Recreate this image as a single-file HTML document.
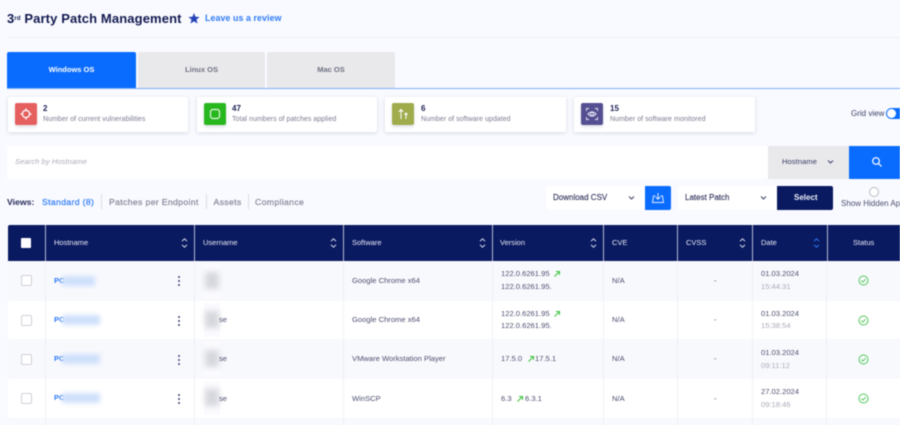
<!DOCTYPE html>
<html><head><meta charset="utf-8"><style>
*{box-sizing:border-box}
html,body{margin:0;padding:0;width:900px;height:425px;overflow:hidden;background:#f9faff}
body{font-family:"Liberation Sans",sans-serif;color:#3d4264}
#p{position:relative;width:900px;height:425px;overflow:hidden;filter:blur(.5px)}
#p div,#p span.a,#p svg{position:absolute}
.t{white-space:nowrap;line-height:12px}
.tab{top:52px;height:36px;background:#e9e9ec;font-size:7.5px;font-weight:bold;color:#6f7182;text-align:center;line-height:36px;border-radius:2px 2px 0 0}
.card{top:97px;height:35px;background:#fff;box-shadow:0 1px 4px rgba(40,50,90,.16);border-radius:2px}
.ic{top:103px;width:21.5px;height:21.5px;border-radius:2px;box-shadow:0 2px 3px rgba(40,50,90,.15)}
.n{top:103px;font-size:8px;font-weight:bold;color:#1c2154}
.s{top:114px;font-size:7px;color:#797b90;letter-spacing:.05px}
.th{top:225px;height:36px;background:#0a1a60;border-right:1px solid #b4bad4}
.hl{top:237px;font-size:7.5px;color:#e9ebf7}
.r{left:8px;width:892px}
.v{top:261px;height:164px;width:1px;background:#f0f1f7}
.c{font-size:7.6px;color:#4d5070}
.cb{left:21px;width:11px;height:11px;border:1px solid #cfd0d8;border-radius:2px;background:#fff}
.g{color:#a9abb9}
.host{left:54px;font-size:7.5px;font-weight:bold;color:#2f7bf5}
.bl{left:62px;width:38px;height:10px;background:#cfe0fb;filter:blur(2.5px)}
.halo{left:204px;width:16px;height:34px;background:#fbfbfe}
.gr{left:205px;width:14px;height:17px;background:#d6d7dd;filter:blur(3px)}
.dot{left:178px;width:2px;height:2px;border-radius:50%;background:#3f4576}
.link{color:#2f7bf5;font-weight:bold}
.vw{top:196px;font-size:8.7px;color:#858799;-webkit-text-stroke:.2px #858799;letter-spacing:.33px}
</style></head><body><div id="p">

<div class="t" style="left:7px;top:12px;font-size:13px;line-height:14px;font-weight:bold;color:#12194f;letter-spacing:.12px">3<span style="font-size:6px;vertical-align:3px">rd</span> Party Patch Management</div>
<svg style="left:188px;top:12px" width="12" height="13" viewBox="0 0 12 13"><path d="M6 1l1.500 3.700 4 .3-3 2.600 1 3.900L6 9.400 2.500 11.500l1-3.900-3-2.600 4-.3z" fill="#2444b8"/></svg>
<div class="t link" style="left:205px;top:12px;font-size:8.800px;letter-spacing:.1px">Leave us a review</div>
<div style="left:7px;top:37px;width:893px;height:1px;background:#eff0f5"></div>

<div class="tab" style="left:7px;width:129px;background:#0a6cff;color:#fff">Windows OS</div>
<div class="tab" style="left:138px;width:127px">Linux OS</div>
<div class="tab" style="left:267px;width:128px">Mac OS</div>
<div style="left:7px;top:88px;width:893px;height:1px;background:#7fb0fb"></div>

<div class="card" style="left:8px;width:180px"></div>
<div class="card" style="left:197px;width:180px"></div>
<div class="card" style="left:385px;width:181px"></div>
<div class="card" style="left:574px;width:181px"></div>

<div class="ic" style="left:15px;background:#e55f5f"></div>
<svg style="left:19px;top:107px" width="14" height="14" viewBox="0 0 14 14" fill="none" stroke="#fff" stroke-width="1.300"><circle cx="7" cy="7" r="3.600"/><path d="M7 1.500v2M7 10.500v2M1.500 7h2M10.500 7h2"/></svg>
<div class="ic" style="left:204px;background:#28b71f"></div>
<svg style="left:208px;top:107px" width="14" height="14" viewBox="0 0 14 14" fill="none" stroke="#e6f7e4" stroke-width="1.200"><rect x="2.500" y="2.500" width="9" height="9" rx="2.500"/></svg>
<div class="ic" style="left:392px;background:#a0ab4c"></div>
<svg style="left:396px;top:107px" width="14" height="14" viewBox="0 0 14 14" fill="none" stroke="#fff" stroke-width="1"><path d="M5 12V2.500M2.800 4.800L5 2.500l2.200 2.300M10 12V6M8.300 7.800L10 6l1.700 1.800"/></svg>
<div class="ic" style="left:581px;background:#544f92"></div>
<svg style="left:585px;top:107px" width="14" height="14" viewBox="0 0 14 14" fill="none" stroke="#e6e5f3" stroke-width=".9"><path d="M1.500 4V1.500H4M10 1.500h2.500V4M12.500 10v2.500H10M4 12.500H1.500V10"/><path d="M2.800 7Q7 2.800 11.200 7 7 11.200 2.800 7z"/><circle cx="7" cy="7" r="1.500"/></svg>

<div class="t n" style="left:43px">2</div>
<div class="t s" style="left:43px">Number of current vulnerabilities</div>
<div class="t n" style="left:232px">47</div>
<div class="t s" style="left:232px">Total numbers of patches applied</div>
<div class="t n" style="left:421px">6</div>
<div class="t s" style="left:421px">Number of software updated</div>
<div class="t n" style="left:610px">15</div>
<div class="t s" style="left:610px">Number of software monitored</div>

<div class="t" style="left:851px;top:108px;font-size:8px;color:#3f4367">Grid view</div>
<div style="left:886px;top:108px;width:22px;height:11px;border-radius:6px;background:#0a6cff"></div>
<div style="left:887px;top:109px;width:9px;height:9px;border-radius:50%;background:#fff"></div>

<div style="left:7px;top:146px;width:761px;height:33px;background:#fff"></div>
<div class="t" style="left:15px;top:156px;font-size:7.500px;font-style:italic;color:#a9abb9;letter-spacing:.1px">Search by Hostname</div>
<div style="left:768px;top:146px;width:81px;height:33px;background:#e9e9ec"></div>
<div class="t" style="left:782px;top:156px;font-size:7.500px;color:#343860;letter-spacing:.1px">Hostname</div>
<svg style="left:827px;top:159px" width="7" height="6" viewBox="0 0 7 6" fill="none" stroke="#3f4367" stroke-width="1"><path d="M1 1.500l2.500 2.500L6 1.500"/></svg>
<div style="left:849px;top:146px;width:51px;height:33px;background:#0a6cff"></div>
<svg style="left:871px;top:156px" width="12" height="12" viewBox="0 0 12 12" fill="none" stroke="#fff" stroke-width="1.200"><circle cx="5" cy="5" r="3.300"/><path d="M7.500 7.500l3 3"/></svg>

<div class="t" style="left:7px;top:196px;font-size:8.700px;font-weight:bold;color:#232858">Views:</div>
<div class="t link" style="left:42px;top:196px;font-size:8.700px;font-weight:normal;-webkit-text-stroke:.2px #2f7bf5;letter-spacing:.33px">Standard (8)</div>
<div style="left:100.500px;top:194px;width:1px;height:15px;background:#dcdde5"></div>
<div class="t vw" style="left:109px">Patches per Endpoint</div>
<div style="left:206px;top:194px;width:1px;height:15px;background:#dcdde5"></div>
<div class="t vw" style="left:213.500px">Assets</div>
<div style="left:248px;top:194px;width:1px;height:15px;background:#dcdde5"></div>
<div class="t vw" style="left:255px">Compliance</div>

<div style="left:546px;top:186px;width:99px;height:24px;background:#fff;border-radius:2px"></div>
<div class="t" style="left:553px;top:192px;font-size:8px;color:#343860;-webkit-text-stroke:.15px #343860">Download CSV</div>
<svg style="left:628px;top:195px" width="7" height="6" viewBox="0 0 7 6" fill="none" stroke="#3f4367" stroke-width="1"><path d="M1 1.500l2.500 2.500L6 1.500"/></svg>
<div style="left:645px;top:186px;width:26px;height:24px;background:#0a6cff;border-radius:0 2px 2px 0"></div>
<svg style="left:651px;top:191px" width="14" height="14" viewBox="0 0 14 14" fill="none" stroke="#dbe9ff" stroke-width="1"><path d="M7 2v6M4.800 6L7 8.200 9.200 6M4.500 5H2.500L1.500 11.500h11L11.500 5h-2"/></svg>
<div style="left:678px;top:186px;width:99px;height:24px;background:#fff;border-radius:2px"></div>
<div class="t" style="left:685px;top:192px;font-size:8px;color:#343860;-webkit-text-stroke:.15px #343860">Latest Patch</div>
<svg style="left:760px;top:195px" width="7" height="6" viewBox="0 0 7 6" fill="none" stroke="#3f4367" stroke-width="1"><path d="M1 1.500l2.500 2.500L6 1.500"/></svg>
<div style="left:777px;top:186px;width:56px;height:24px;background:#0a1a60;border-radius:0 2px 2px 0"></div>
<div class="t" style="left:794px;top:192px;font-size:8px;font-weight:bold;color:#eef0fa">Select</div>
<div style="left:869px;top:187px;width:10px;height:10px;border:1px solid #b9bac4;border-radius:50%;background:#fff"></div>
<div class="t" style="left:841px;top:198px;font-size:8px;color:#4d5070">Show Hidden Apps</div>

<!-- table rows -->
<div class="r" style="top:261px;height:40px;background:#f8f9fd"></div>
<div class="r" style="top:301px;height:38px;background:#fff"></div>
<div class="r" style="top:339px;height:40px;background:#f8f9fd"></div>
<div class="r" style="top:379px;height:39px;background:#fff"></div>
<div class="r" style="top:418px;height:7px;background:#f8f9fd"></div>
<div class="v" style="left:45px"></div><div class="v" style="left:194px"></div><div class="v" style="left:343px"></div><div class="v" style="left:492px"></div><div class="v" style="left:603px"></div><div class="v" style="left:677px"></div><div class="v" style="left:752px"></div><div class="v" style="left:826px"></div>

<!-- header -->
<div class="th" style="left:8px;width:38px;border-radius:2px 0 0 0"></div>
<div class="th" style="left:46px;width:149px"></div>
<div class="th" style="left:195px;width:149px"></div>
<div class="th" style="left:344px;width:149px"></div>
<div class="th" style="left:493px;width:111px"></div>
<div class="th" style="left:604px;width:74px"></div>
<div class="th" style="left:678px;width:75px"></div>
<div class="th" style="left:753px;width:75px"></div>
<div class="th" style="left:828px;width:72px;border-right:0"></div>
<div style="left:21px;top:238px;width:10px;height:10px;background:#fff;border-radius:1px"></div>
<div class="t hl" style="left:54px">Hostname</div>
<div class="t hl" style="left:203px">Username</div>
<div class="t hl" style="left:352px">Software</div>
<div class="t hl" style="left:500px">Version</div>
<div class="t hl" style="left:612px">CVE</div>
<div class="t hl" style="left:686px">CVSS</div>
<div class="t hl" style="left:761px">Date</div>
<div class="t hl" style="left:853px">Status</div>
<svg style="left:181px;top:237px" width="7" height="12" viewBox="0 0 7 12" fill="none" stroke="#dfe2f0" stroke-width="1"><path d="M1 4.200L3.500 1.800 6 4.200M1 7.800l2.500 2.400L6 7.800"/></svg>
<svg style="left:330px;top:237px" width="7" height="12" viewBox="0 0 7 12" fill="none" stroke="#dfe2f0" stroke-width="1"><path d="M1 4.200L3.500 1.800 6 4.200M1 7.800l2.500 2.400L6 7.800"/></svg>
<svg style="left:479px;top:237px" width="7" height="12" viewBox="0 0 7 12" fill="none" stroke="#dfe2f0" stroke-width="1"><path d="M1 4.200L3.500 1.800 6 4.200M1 7.800l2.500 2.400L6 7.800"/></svg>
<svg style="left:590px;top:237px" width="7" height="12" viewBox="0 0 7 12" fill="none" stroke="#dfe2f0" stroke-width="1"><path d="M1 4.200L3.500 1.800 6 4.200M1 7.800l2.500 2.400L6 7.800"/></svg>
<svg style="left:739px;top:237px" width="7" height="12" viewBox="0 0 7 12" fill="none" stroke="#dfe2f0" stroke-width="1"><path d="M1 4.200L3.500 1.800 6 4.200M1 7.800l2.500 2.400L6 7.800"/></svg>
<svg style="left:813px;top:237px" width="7" height="12" viewBox="0 0 7 12" fill="none" stroke-width="1"><path stroke="#2f7bf5" d="M1 4.200L3.500 1.800 6 4.200"/><path stroke="#2f7bf5" d="M1 7.800l2.500 2.400L6 7.800"/></svg>

<!-- row 1 -->
<div class="cb" style="top:275px"></div><div class="t host" style="top:275px">PC</div><div class="bl" style="top:276px;width:33px"></div>
<div class="dot" style="top:276px"></div><div class="dot" style="top:280px"></div><div class="dot" style="top:284px"></div>
<div class="halo" style="top:264px"></div><div class="gr" style="top:272px"></div>
<div class="t c" style="left:352px;top:275px">Google Chrome x64</div>
<div class="t c" style="left:501px;top:268px">122.0.6261.95</div>
<svg style="left:553px;top:270px" width="8" height="8" viewBox="0 0 8 8" fill="none" stroke="#3cc23a" stroke-width="1"><path d="M1.500 6.500L6.500 1.500M3 1.500h3.500V5"/></svg>
<div class="t c" style="left:501px;top:281px">122.0.6261.95.</div>
<div class="t c" style="left:612px;top:275px">N/A</div>
<div class="t c" style="left:714px;top:275px">-</div>
<div class="t c" style="left:761px;top:268px">01.03.2024</div>
<div class="t c g" style="left:761px;top:281px">15:44:31</div>
<svg style="left:858px;top:275px" width="11" height="11" viewBox="0 0 11 11" fill="none" stroke="#4fc95a" stroke-width="1"><circle cx="5.500" cy="5.500" r="4.500"/><path d="M3.300 5.600l1.600 1.500 2.800-2.900"/></svg>

<!-- row 2 -->
<div class="cb" style="top:315px"></div><div class="t host" style="top:314px">PC</div><div class="bl" style="top:315px"></div>
<div class="dot" style="top:316px"></div><div class="dot" style="top:320px"></div><div class="dot" style="top:324px"></div>
<div class="halo" style="top:303px"></div><div class="gr" style="top:311px"></div>
<div class="t c" style="left:219px;top:314px">se</div>
<div class="t c" style="left:352px;top:314px">Google Chrome x64</div>
<div class="t c" style="left:501px;top:308px">122.0.6261.95</div>
<svg style="left:553px;top:310px" width="8" height="8" viewBox="0 0 8 8" fill="none" stroke="#3cc23a" stroke-width="1"><path d="M1.500 6.500L6.500 1.500M3 1.500h3.500V5"/></svg>
<div class="t c" style="left:501px;top:320px">122.0.6261.95.</div>
<div class="t c" style="left:612px;top:314px">N/A</div>
<div class="t c" style="left:714px;top:314px">-</div>
<div class="t c" style="left:761px;top:308px">01.03.2024</div>
<div class="t c g" style="left:761px;top:320px">15:38:54</div>
<svg style="left:858px;top:315px" width="11" height="11" viewBox="0 0 11 11" fill="none" stroke="#4fc95a" stroke-width="1"><circle cx="5.500" cy="5.500" r="4.500"/><path d="M3.300 5.600l1.600 1.500 2.800-2.900"/></svg>

<!-- row 3 -->
<div class="cb" style="top:354px"></div><div class="t host" style="top:353px">PC</div><div class="bl" style="top:354px"></div>
<div class="dot" style="top:355px"></div><div class="dot" style="top:359px"></div><div class="dot" style="top:363px"></div>
<div class="halo" style="top:342px"></div><div class="gr" style="top:350px"></div>
<div class="t c" style="left:219px;top:353px">se</div>
<div class="t c" style="left:352px;top:353px">VMware Workstation Player</div>
<div class="t c" style="left:501px;top:353px">17.5.0</div>
<svg style="left:527px;top:355px" width="8" height="8" viewBox="0 0 8 8" fill="none" stroke="#3cc23a" stroke-width="1"><path d="M1.500 6.500L6.500 1.500M3 1.500h3.500V5"/></svg>
<div class="t c" style="left:535px;top:353px">17.5.1</div>
<div class="t c" style="left:612px;top:353px">N/A</div>
<div class="t c" style="left:714px;top:353px">-</div>
<div class="t c" style="left:761px;top:347px">01.03.2024</div>
<div class="t c g" style="left:761px;top:360px">09:11:12</div>
<svg style="left:858px;top:354px" width="11" height="11" viewBox="0 0 11 11" fill="none" stroke="#4fc95a" stroke-width="1"><circle cx="5.500" cy="5.500" r="4.500"/><path d="M3.300 5.600l1.600 1.500 2.800-2.900"/></svg>

<!-- row 4 -->
<div class="cb" style="top:393px"></div><div class="t host" style="top:392px">PC</div><div class="bl" style="top:393px"></div>
<div class="dot" style="top:394px"></div><div class="dot" style="top:398px"></div><div class="dot" style="top:402px"></div>
<div class="halo" style="top:381px"></div><div class="gr" style="top:389px"></div>
<div class="t c" style="left:219px;top:393px">se</div>
<div class="t c" style="left:352px;top:393px">WinSCP</div>
<div class="t c" style="left:501px;top:393px">6.3</div>
<svg style="left:516px;top:395px" width="8" height="8" viewBox="0 0 8 8" fill="none" stroke="#3cc23a" stroke-width="1"><path d="M1.500 6.500L6.500 1.500M3 1.500h3.500V5"/></svg>
<div class="t c" style="left:525px;top:393px">6.3.1</div>
<div class="t c" style="left:612px;top:393px">N/A</div>
<div class="t c" style="left:714px;top:393px">-</div>
<div class="t c" style="left:761px;top:386px">27.02.2024</div>
<div class="t c g" style="left:761px;top:399px">09:18:46</div>
<svg style="left:858px;top:393px" width="11" height="11" viewBox="0 0 11 11" fill="none" stroke="#4fc95a" stroke-width="1"><circle cx="5.500" cy="5.500" r="4.500"/><path d="M3.300 5.600l1.600 1.500 2.800-2.900"/></svg>

</div></body></html>
